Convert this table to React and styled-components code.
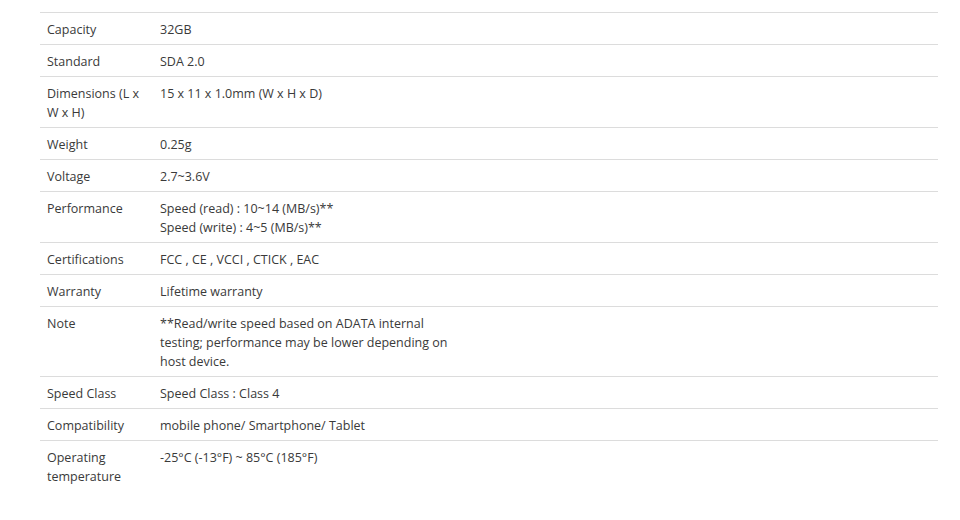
import React from 'react'
import styled, { createGlobalStyle } from 'styled-components'

const GlobalStyle = createGlobalStyle`
  html, body {
    margin: 0;
    padding: 0;
    background: #fff;
  }
  body {
    font-family: "Open Sans", "Noto Sans", sans-serif;
  }
`

const specs = [
  { label: 'Capacity', value: ['32GB'] },
  { label: 'Standard', value: ['SDA 2.0'] },
  { label: 'Dimensions (L x W x H)', value: ['15 x 11 x 1.0mm (W x H x D)'] },
  { label: 'Weight', value: ['0.25g'] },
  { label: 'Voltage', value: ['2.7~3.6V'] },
  { label: 'Performance', value: ['Speed (read) : 10~14 (MB/s)**', 'Speed (write) : 4~5 (MB/s)**'] },
  { label: 'Certifications', value: ['FCC , CE , VCCI , CTICK , EAC'] },
  { label: 'Warranty', value: ['Lifetime warranty'] },
  { label: 'Note', value: ['**Read/write speed based on ADATA internal testing; performance may be lower depending on host device.'] },
  { label: 'Speed Class', value: ['Speed Class : Class 4'] },
  { label: 'Compatibility', value: ['mobile phone/ Smartphone/ Tablet'] },
  { label: 'Operating temperature', value: ['-25°C (-13°F) ~ 85°C (185°F)'] },
]

const Wrapper = styled.div`
  padding: 12px 22px 0 40px;
`

const SpecTable = styled.table`
  width: 898px;
  border-collapse: collapse;
  font-size: 12.5px;
  line-height: 19px;
  color: #3a3a3a;
`

const Row = styled.tr`
  border-top: 1px solid #dcdcdc;
  border-bottom: ${p => (p.$last ? 'none' : '1px solid #dcdcdc')};
`

const Label = styled.td`
  width: 100px;
  padding: 7px 13px 5px 7px;
  vertical-align: top;
`

const Value = styled.td`
  padding: 7px 0 5px;
  vertical-align: top;
`

const ValueText = styled.div`
  max-width: 300px;
`

export default function App() {
  return (
    <Wrapper>
      <GlobalStyle />
      <SpecTable>
        <tbody>
          {specs.map((s, i) => (
            <Row key={s.label} $last={i === specs.length - 1}>
              <Label>{s.label}</Label>
              <Value>
                <ValueText>
                  {s.value.map(v => (
                    <div key={v}>{v}</div>
                  ))}
                </ValueText>
              </Value>
            </Row>
          ))}
        </tbody>
      </SpecTable>
    </Wrapper>
  )
}
